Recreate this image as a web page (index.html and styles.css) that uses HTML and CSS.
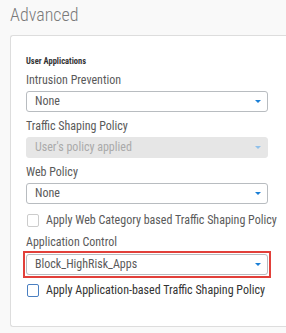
FILE: index.html
```html
<!DOCTYPE html>
<html lang="en">

<head>
    <meta charset="UTF-8">
    <title>Advanced</title>
    <link rel="stylesheet" href="styles.css">
</head>

<body>
    <h2 class="section-title">Advanced</h2>
    <div class="card">
        <h3 class="group-title">User Applications</h3>

        <label class="field-label">Intrusion Prevention</label>
        <div class="select">None</div>

        <label class="field-label">Traffic Shaping Policy</label>
        <div class="select disabled">User's policy applied</div>

        <label class="field-label">Web Policy</label>
        <div class="select">None</div>

        <label class="check">
            <span class="box"></span>
            Apply Web Category based Traffic Shaping Policy
        </label>

        <label class="field-label tight">Application Control</label>
        <div class="highlight">
            <div class="select">Block_HighRisk_Apps</div>
        </div>

        <label class="check active">
            <span class="box"></span>
            Apply Application-based Traffic Shaping Policy
        </label>
    </div>
</body>

</html>
```

FILE: styles.css
```css
* {
    box-sizing: border-box;
}

body {
    margin: 0;
    font-family: "Roboto Condensed", Roboto, sans-serif;
    background-color: #f9f9f9;
    overflow: hidden;
    height: 333px;
}

.section-title {
    margin: 0;
    height: 35px;
    padding: 4px 0 0 10px;
    font-size: 18px;
    line-height: 22px;
    font-weight: 300;
    color: #7a7a7a;
}

.card {
    margin-left: 10px;
    width: 276px;
    height: 292px;
    background-color: #ffffff;
    border: 1px solid #dddddd;
    border-right: none;
    border-radius: 3px 0 0 3px;
    padding: 20px 0 0 15px;
    display: flex;
    flex-direction: column;
}

.group-title {
    margin: 0 0 6px;
    font-size: 8.5px;
    line-height: 11px;
    font-weight: 700;
    color: #333333;
}

.field-label {
    font-size: 12px;
    line-height: 14px;
    color: #5a5a5a;
    margin-bottom: 4px;
}

.field-label.tight {
    margin-bottom: 2px;
}

.select {
    position: relative;
    width: 242px;
    height: 21px;
    border: 1px solid #b8bcc0;
    border-radius: 3px;
    padding: 0 8px;
    font-size: 12px;
    line-height: 19px;
    color: #5a5a5a;
    margin-bottom: 7px;
}

.select::after {
    content: "";
    position: absolute;
    right: 6px;
    top: 8px;
    border-left: 3px solid transparent;
    border-right: 3px solid transparent;
    border-top: 3px solid #1a7fd6;
}

.select.disabled {
    background-color: #e6e6e6;
    border-color: #e6e6e6;
    color: #aaaaaa;
}

.select.disabled::after {
    border-top-color: #8fc0ea;
}

.check {
    display: flex;
    align-items: center;
    gap: 7px;
    font-size: 12px;
    line-height: 14px;
    color: #5a5a5a;
    margin: 2px 0 8px 1px;
    white-space: nowrap;
}

.box {
    width: 12px;
    height: 13px;
    border: 1px solid #cccccc;
    border-radius: 2px;
    flex-shrink: 0;
}

.check.active {
    color: #333333;
    margin-top: 5px;
}

.check.active .box {
    border-color: #4a7fc1;
}

.highlight {
    margin-left: -3px;
    width: 248px;
    border: 2px solid #e2403a;
    padding: 1px;
}

.highlight .select {
    margin-bottom: 0;
}
```
